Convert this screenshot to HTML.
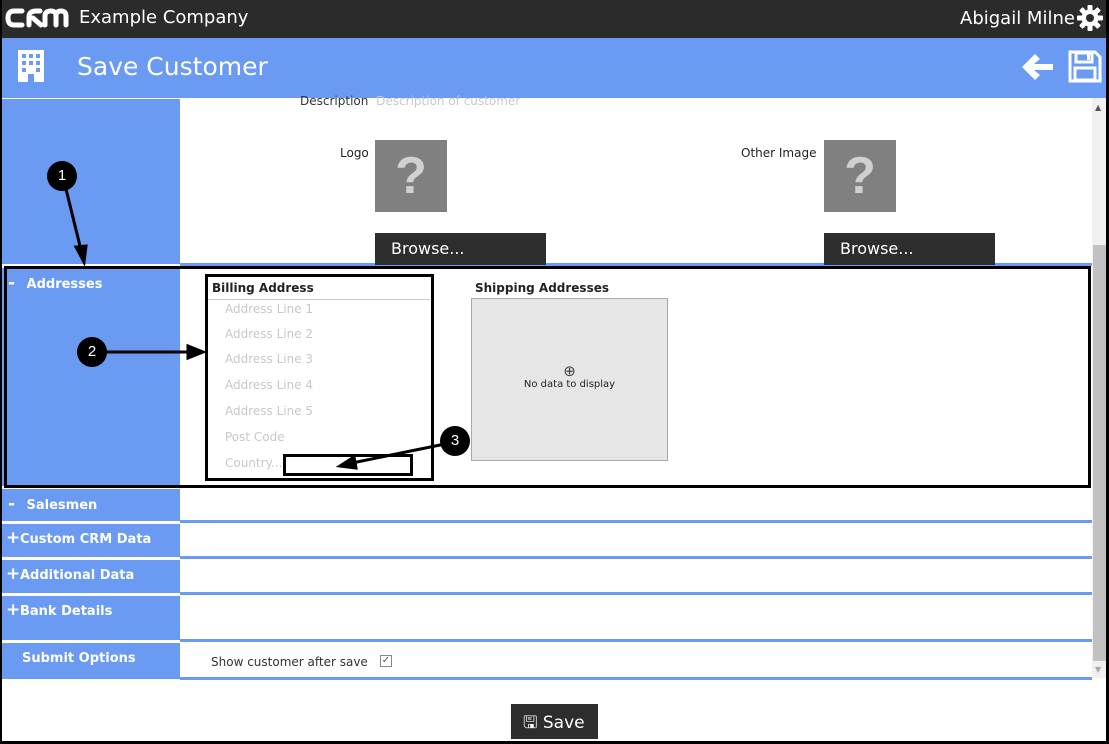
<!DOCTYPE html>
<html><head><meta charset="utf-8"><style>
*{margin:0;padding:0;box-sizing:border-box}
body{width:1109px;height:744px;position:relative;overflow:hidden;background:#fff;font-family:"DejaVu Sans","Liberation Sans",sans-serif}
.a{position:absolute}
.side{background:#6a9af2;color:#fff;font-size:13px;font-weight:bold}
.side b{font-size:17px;display:inline-block;width:14px}
.line{background:#6a9af2;height:3px}
.ph{color:#c8c8c8;font-size:12px;position:absolute;left:225px}
.circ{position:absolute;width:30px;height:30px;border-radius:50%;background:#000;color:#fff;font:15px "Liberation Sans",sans-serif;text-align:center;line-height:30px}
.browse{position:absolute;background:#2d2d2d;color:#fff;font-size:16px;padding:6px 0 0 16px;height:32px;width:171px}
.q{position:absolute;width:72px;height:72px;background:#808080;color:#d0d0d0;font:bold 52px "Liberation Sans",sans-serif;text-align:center;line-height:72px}
</style></head><body>
<div class="a" style="left:0;top:0;width:1109px;height:38px;background:#2b2b2b"></div>
<svg class="a" style="left:5px;top:7px" width="64" height="22"><g fill="none" stroke="#fff" stroke-width="5" stroke-linecap="round">
<path d="M17 4 H9 Q3 4 3 11 Q3 18 9 18 H17"/>
<path d="M24 18 V10 Q24 4 31 4 H35 M28 11 L36 18"/>
<path d="M40 18 V9 Q40 4 46 4 Q51 4 51 9 V18 M51 9 Q51 4 56 4 Q61 4 61 9 V18"/></g></svg>
<div class="a" style="left:79px;top:7px;color:#fff;font-size:18px">Example Company</div>
<div class="a" style="left:960px;top:8px;color:#fff;font-size:18px">Abigail Milne</div>
<svg class="a" style="left:1077px;top:5px" width="26" height="26" viewBox="0 0 26 26"><g fill="#fff"><circle cx="13" cy="13" r="8.5"/><g id="t"><rect x="10.5" y="0" width="5" height="26" rx="1"/></g><rect x="10.5" y="0" width="5" height="26" rx="1" transform="rotate(45 13 13)"/><rect x="10.5" y="0" width="5" height="26" rx="1" transform="rotate(90 13 13)"/><rect x="10.5" y="0" width="5" height="26" rx="1" transform="rotate(135 13 13)"/></g><circle cx="13" cy="13" r="4" fill="#2b2b2b"/></svg>
<div class="a" style="left:0;top:38px;width:1109px;height:60px;background:#6a9af2"></div>
<svg class="a" style="left:18px;top:50px" width="26" height="32"><rect x="0" y="0" width="26" height="32" fill="#fff"/><g fill="#6a9af2"><rect x="4" y="4" width="4" height="4"/><rect x="11" y="4" width="4" height="4"/><rect x="18" y="4" width="4" height="4"/><rect x="4" y="11" width="4" height="4"/><rect x="11" y="11" width="4" height="4"/><rect x="18" y="11" width="4" height="4"/><rect x="4" y="18" width="4" height="4"/><rect x="18" y="18" width="4" height="4"/><rect x="10" y="24" width="6" height="8"/></g></svg>
<div class="a" style="left:77px;top:52px;color:#fff;font-size:25px">Save Customer</div>
<svg class="a" style="left:1020px;top:52px" width="34" height="30"><path d="M15 2 L2 15 L15 28 L20 23 L14 18 H33 V12 H14 L20 7Z" fill="#fff"/></svg>
<svg class="a" style="left:1068px;top:50px" width="34" height="33"><path d="M2 2 H27 L32 7 V31 H2Z" fill="none" stroke="#fff" stroke-width="3"/><rect x="8" y="3" width="16" height="9" fill="none" stroke="#fff" stroke-width="3"/><rect x="7" y="18" width="20" height="12" fill="none" stroke="#fff" stroke-width="3"/><rect x="19" y="4" width="3" height="6" fill="#fff"/></svg>

<div class="a side" style="left:2px;top:99px;width:178px;height:165px"></div>
<div class="a side" style="left:2px;top:268px;width:178px;height:218px"><span style="position:absolute;left:6px;top:5px"><b>-</b> Addresses</span></div>
<div class="a side" style="left:2px;top:489px;width:178px;height:32px"><span style="position:absolute;left:6px;top:5px"><b>-</b> Salesmen</span></div>
<div class="a side" style="left:2px;top:524px;width:178px;height:33px"><span style="position:absolute;left:4px;top:4px"><b>+</b>Custom CRM Data</span></div>
<div class="a side" style="left:2px;top:560px;width:178px;height:33px"><span style="position:absolute;left:4px;top:4px"><b>+</b>Additional Data</span></div>
<div class="a side" style="left:2px;top:596px;width:178px;height:44px"><span style="position:absolute;left:4px;top:4px"><b>+</b>Bank Details</span></div>
<div class="a side" style="left:2px;top:643px;width:178px;height:36px"><span style="position:absolute;left:20px;top:8px">Submit Options</span></div>

<div class="a line" style="left:180px;top:263px;width:912px"></div>
<div class="a line" style="left:180px;top:520px;width:912px"></div>
<div class="a line" style="left:180px;top:556px;width:912px"></div>
<div class="a line" style="left:180px;top:592px;width:912px"></div>
<div class="a line" style="left:180px;top:639px;width:912px"></div>
<div class="a line" style="left:180px;top:677px;width:912px"></div>

<div class="a" style="left:300px;top:94px;font-size:12px;color:#333">Description <span style="color:#c8c8c8;margin-left:4px">Description of customer</span></div>
<div class="a" style="left:340px;top:146px;font-size:12px;color:#222">Logo</div>
<div class="q" style="left:375px;top:140px">?</div>
<div class="browse" style="left:375px;top:233px">Browse...</div>
<div class="a" style="left:741px;top:146px;font-size:12px;color:#222">Other Image</div>
<div class="q" style="left:824px;top:140px">?</div>
<div class="browse" style="left:824px;top:233px">Browse...</div>

<div class="a" style="left:212px;top:281px;font-size:12px;font-weight:bold;color:#222">Billing Address</div>
<div class="a" style="left:208px;top:299px;width:222px;height:1px;background:#ccc"></div>
<div class="ph" style="top:302px">Address Line 1</div>
<div class="ph" style="top:327px">Address Line 2</div>
<div class="ph" style="top:352px">Address Line 3</div>
<div class="ph" style="top:378px">Address Line 4</div>
<div class="ph" style="top:404px">Address Line 5</div>
<div class="ph" style="top:430px">Post Code</div>
<div class="ph" style="top:456px">Country...</div>
<div class="a" style="left:475px;top:281px;font-size:12px;font-weight:bold;color:#222">Shipping Addresses</div>
<div class="a" style="left:471px;top:298px;width:197px;height:163px;background:#e6e6e6;border:1px solid #aaa;text-align:center;font-size:10px;color:#222"><div style="margin-top:64px;font-size:15px;line-height:16px;color:#444">⊕</div>No data to display</div>

<div class="a" style="left:211px;top:655px;font-size:12px;color:#333">Show customer after save</div>
<div class="a" style="left:380px;top:655px;width:12px;height:12px;border:1px solid #888;font-size:10px;line-height:10px;text-align:center;color:#555">✓</div>

<div class="a" style="left:511px;top:704px;width:87px;height:35px;background:#2d2d2d;color:#fff;font-size:17px;padding:6px 0 0 12px">🖫 Save</div>

<div class="a" style="left:1092px;top:98px;width:15px;height:580px;background:#f0f0f0"></div>
<div class="a" style="left:1093px;top:245px;width:13px;height:416px;background:#c1c1c1"></div>
<div class="a" style="left:1095px;top:103px;font-size:8px;color:#555">▲</div>
<div class="a" style="left:1095px;top:665px;font-size:8px;color:#aaa">▼</div>

<div class="a" style="left:4px;top:266px;width:1087px;height:222px;border:3px solid #000"></div>
<div class="a" style="left:205px;top:274px;width:229px;height:207px;border:3px solid #000"></div>
<div class="a" style="left:283px;top:454px;width:130px;height:22px;border:3px solid #000"></div>
<svg class="a" style="left:0;top:0" width="1109" height="744">
<g stroke="#000" stroke-width="3" fill="#000">
<line x1="65" y1="185" x2="81" y2="250"/><path d="M84 262 L76 247 L86 246Z"/>
<line x1="100" y1="352" x2="190" y2="352"/><path d="M203 352 L188 346 L188 358Z"/>
<line x1="445" y1="444" x2="352" y2="463"/><path d="M340 466 L354 457 L356 468Z"/>
</g>
</svg>
<div class="a" style="left:0;top:0;width:2px;height:744px;background:#000"></div>
<div class="a" style="left:1106px;top:0;width:3px;height:744px;background:#000"></div>
<div class="a" style="left:0;top:741px;width:1109px;height:3px;background:#000"></div>
<div class="circ" style="left:47px;top:161px">1</div>
<div class="circ" style="left:77px;top:337px">2</div>
<div class="circ" style="left:440px;top:426px">3</div>
</body></html>
